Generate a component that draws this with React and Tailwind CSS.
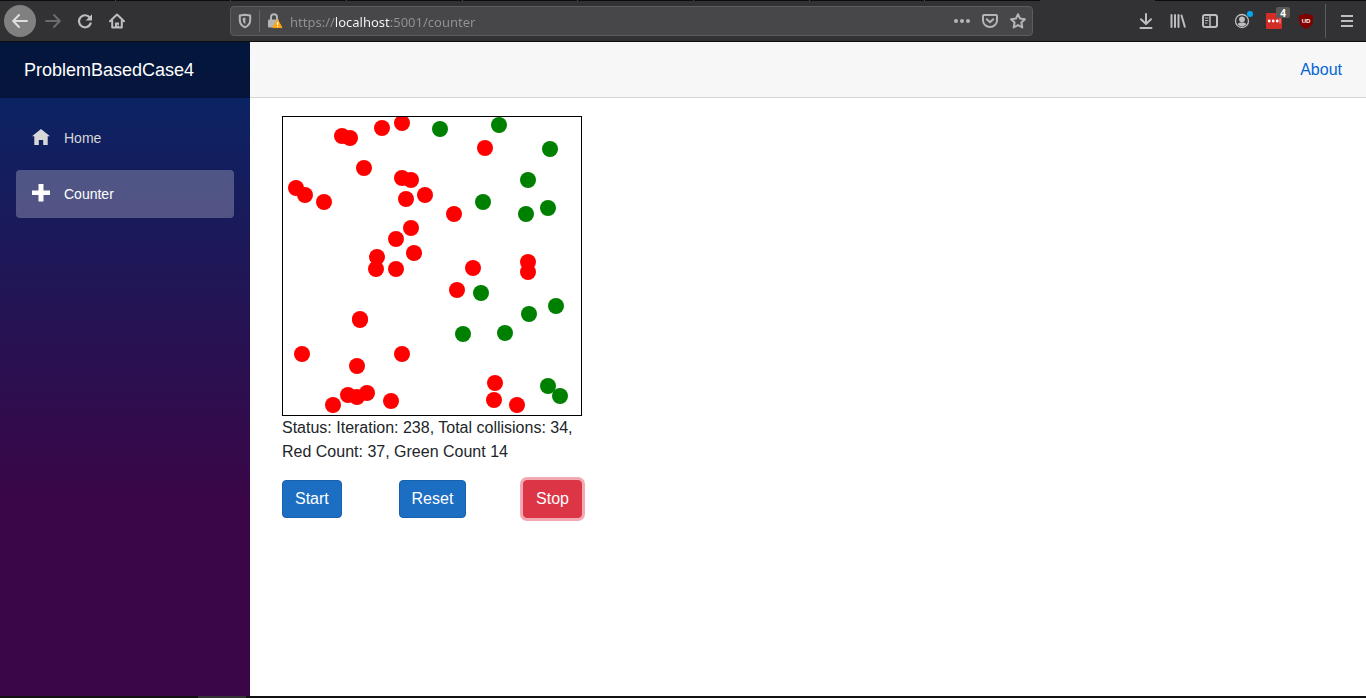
import React from "react";

const RED_DOTS = [
  [59, 19], [67, 21], [99, 11], [119, 6], [81, 51], [13, 71], [22, 78], [41, 85],
  [119, 61], [128, 63], [123, 82], [142, 78], [128, 111], [113, 122], [131, 136],
  [94, 140], [93, 152], [113, 152], [202, 31], [171, 97], [190, 151], [245, 145],
  [245, 155], [174, 173], [77, 202], [77, 203], [19, 237], [119, 237], [74, 249],
  [65, 278], [74, 280], [84, 276], [50, 288], [108, 284], [212, 266], [211, 283],
  [234, 288],
];

const GREEN_DOTS = [
  [157, 12], [216, 8], [267, 32], [245, 63], [200, 85], [243, 97], [265, 91],
  [198, 176], [246, 197], [273, 189], [180, 217], [222, 216], [265, 269], [277, 279],
];

const TABS = [1, 2, 3, 4, 5, 6, 7, 8, 9];

function Icon({ children, size = 16, className = "" }) {
  return (
    <svg
      width={size}
      height={size}
      viewBox="0 0 16 16"
      fill="none"
      stroke="currentColor"
      strokeWidth="2"
      strokeLinecap="round"
      strokeLinejoin="round"
      className={className}
      aria-hidden="true"
    >
      {children}
    </svg>
  );
}

function ToolButton({ label, tone = "text-[#bebebf]", className = "", children }) {
  return (
    <button
      type="button"
      aria-label={label}
      className={`flex h-8 w-8 shrink-0 items-center justify-center ${tone} ${className}`}
    >
      {children}
    </button>
  );
}

function AddressBar() {
  return (
    <div className="mx-[97px] flex h-[30px] min-w-0 flex-1 items-center rounded-sm border border-[#5c5c5e] bg-[#474749] text-[#b5b5b6]">
      <button type="button" aria-label="Tracking protection" className="flex h-7 w-7 shrink-0 items-center justify-center">
        <Icon size={16}>
          <path d="M8 1.700 13.200 2.600v4.200c0 3.600-1.900 6.100-5.200 7.500C4.700 12.900 2.800 10.400 2.800 6.800V2.600z" />
          <path d="M8.400 4.400v6.800C6.600 10.200 5.800 8.700 5.800 6.800V4.900z" fill="currentColor" stroke="none" />
        </Icon>
      </button>
      <span className="h-[22px] w-px shrink-0 bg-[#66666a]" />
      <button type="button" aria-label="Connection is not secure" className="flex h-7 w-[30px] shrink-0 items-center justify-center">
        <Icon size={16}>
          <path d="M4 7V4.200a3 3 0 0 1 6 0V7" strokeLinecap="butt" />
          <rect x="1" y="6.500" width="11" height="8" rx="1" fill="currentColor" stroke="none" />
          <path d="M10.600 6.800 15 14.600H6.200z" fill="#ffa50e" stroke="#ffa50e" strokeWidth="1" />
          <path d="M10.600 9v2.800M10.600 13v1" stroke="#fff" strokeWidth="1.300" strokeLinecap="butt" />
        </Icon>
      </button>
      <input
        aria-label="Address"
        type="text"
        defaultValue="https://localhost:5001/counter"
        className="h-7 min-w-0 flex-1 bg-[linear-gradient(90deg,#929293_46px,#f9f9fa_46px,#f9f9fa_100px,#929293_100px)] bg-clip-text pt-[2px] font-['Noto_Sans',sans-serif] text-[13px] text-transparent outline-none"
      />
      <button type="button" aria-label="Page actions" className="flex h-7 w-7 shrink-0 items-center justify-center">
        <Icon size={16}>
          <g fill="currentColor" stroke="none">
            <circle cx="2" cy="8" r="2" />
            <circle cx="8" cy="8" r="2" />
            <circle cx="14" cy="8" r="2" />
          </g>
        </Icon>
      </button>
      <button type="button" aria-label="Save to Pocket" className="flex h-7 w-7 shrink-0 items-center justify-center">
        <Icon size={16}>
          <path d="M2 2h12a1 1 0 0 1 1 1v4.500a7 6.500 0 0 1-14 0V3a1 1 0 0 1 1-1z" />
          <path d="M4.800 6.200 8 9.200l3.200-3" />
        </Icon>
      </button>
      <button type="button" aria-label="Bookmark this page" className="flex h-7 w-7 shrink-0 items-center justify-center">
        <Icon size={16}>
          <path d="M8 1.200 10.100 5.600 14.900 6.200 11.400 9.500 12.300 14.400 8 12 3.700 14.400 4.600 9.500 1.100 6.200 5.900 5.600z" />
        </Icon>
      </button>
    </div>
  );
}

function BrowserBar() {
  return (
    <div className="border-b border-[#0c0c0d] bg-[#323234]">
      <div className="flex h-px" aria-hidden="true">
        <div className="flex flex-1 bg-[#0c0c0d]">
          {TABS.map((tab) => (
            <div key={tab} className="h-px flex-1 border-r border-[#4a4a4c] last:border-r-0" />
          ))}
        </div>
        <div className="w-[115px]" />
        <div className="w-[211px] bg-[#0c0c0d]" />
      </div>
      <div className="flex h-10 items-center pr-[3px] pl-1">
        <ToolButton label="Back" tone="text-[#dededf]" className="rounded-full bg-[#808081]">
          <Icon><path d="M15 8H1.500M7 2 1.200 8 7 14" /></Icon>
        </ToolButton>
        <ToolButton label="Forward" tone="text-[#6b6b6d]" className="ml-px">
          <Icon><path d="M1 8h13.500M9 2l5.800 6L9 14" /></Icon>
        </ToolButton>
        <ToolButton label="Reload">
          <Icon>
            <path d="M12.800 4.600A6 6 0 1 0 13.600 10.500" strokeWidth="2.200" />
            <path d="M15 1.200v6.300H8.700z" fill="currentColor" stroke="none" />
          </Icon>
        </ToolButton>
        <ToolButton label="Home">
          <Icon>
            <path d="M1 8.300 8 1.500l7 6.800M3.200 7.500v7h9.600v-7" />
            <path d="M6 15V9.500h4V15z" fill="currentColor" stroke="none" />
            <circle cx="8.800" cy="12.300" r=".7" fill="#323234" stroke="none" />
          </Icon>
        </ToolButton>
        <AddressBar />
        <ToolButton label="Downloads">
          <Icon><path d="M8 1v9.500M3 6.200l5 4.800 5-4.800M2.500 15h11" /></Icon>
        </ToolButton>
        <ToolButton label="Library">
          <Icon><path d="M1.500 2v12M5 2v12M8.500 2v12M11.500 2.500l3.300 11.200" /></Icon>
        </ToolButton>
        <ToolButton label="Sidebars">
          <Icon>
            <rect x="1" y="2" width="14" height="12" rx="2" />
            <path d="M8 2v12" strokeWidth="1.500" />
            <path d="M3.500 5h2.500M3.500 7.500h2.500M3.500 10h1.500" strokeWidth="1" />
          </Icon>
        </ToolButton>
        <ToolButton label="Account" className="relative">
          <Icon>
            <circle cx="8" cy="8" r="6.500" strokeWidth="1.300" />
            <circle cx="8" cy="6.300" r="2.900" fill="currentColor" stroke="none" />
            <path d="M3.600 11.300c1-1.600 2.600-1.800 4.400-1.800s3.400.2 4.400 1.800A5.500 5.500 0 0 1 8 13.400a5.500 5.500 0 0 1-4.400-2.100z" fill="currentColor" stroke="none" />
          </Icon>
          <span className="absolute top-[6px] right-[5px] h-[6px] w-[6px] rounded-full bg-[#00a8f3]" />
        </ToolButton>
        <ToolButton label="Password manager" className="relative">
          <svg width="16" height="16" viewBox="0 0 16 16" aria-hidden="true">
            <rect width="16" height="16" rx="1" fill="#d32d27" />
            <g fill="#fff">
              <circle cx="3.200" cy="8" r="1.400" />
              <circle cx="7.200" cy="8" r="1.400" />
              <circle cx="11.200" cy="8" r="1.400" />
            </g>
            <path d="M14 5.500v5" stroke="#f0a8a5" strokeWidth="1" />
          </svg>
          <span className="absolute top-[2px] right-0 flex h-[11px] w-[14px] items-center justify-center rounded-xs bg-[#5a5a5b] font-['Noto_Sans',sans-serif] text-[10px] leading-none font-bold text-white">
            4
          </span>
        </ToolButton>
        <ToolButton label="Content blocker">
          <svg width="16" height="16" viewBox="0 0 16 16" aria-hidden="true">
            <path d="M8 .2C6 1.500 4 2 1 2v5.500c0 4 2.900 6.700 7 8.400 4.100-1.700 7-4.400 7-8.400V2C12 2 10 1.500 8 .2z" fill="#800000" />
            <text x="8" y="9.700" fill="#fff" fontSize="6" fontWeight="700" textAnchor="middle" fontFamily="Liberation Sans, sans-serif">UD</text>
          </svg>
        </ToolButton>
        <span className="mr-[5px] ml-[3px] h-[34px] w-px shrink-0 bg-[#5c5c5e]" />
        <ToolButton label="Open menu">
          <Icon><path d="M2 3h12M2 8h12M2 13h12" strokeLinecap="butt" /></Icon>
        </ToolButton>
      </div>
    </div>
  );
}

function NavItem({ href, label, active, icon }) {
  return (
    <a
      href={href}
      className={
        active
          ? "flex h-12 items-center rounded bg-white/25 px-4 text-sm text-white"
          : "flex h-12 items-center rounded px-4 text-sm text-[#d7d7d7]"
      }
    >
      <span className="w-8 pb-[2px]">
        <svg width="18" height="18" viewBox="0 0 18 18" fill="currentColor" aria-hidden="true">
          {icon}
        </svg>
      </span>
      {label}
    </a>
  );
}

function Sidebar() {
  return (
    <nav className="w-[250px] shrink-0 bg-[linear-gradient(180deg,#052767_0%,#3a0647_70%)]">
      <div className="flex h-14 items-center bg-black/40 px-6">
        <a href="/" className="text-lg text-white">ProblemBasedCase4</a>
      </div>
      <div className="flex flex-col gap-2 p-4">
        <NavItem
          href="/"
          label="Home"
          icon={<path d="M9 1 0 8.200h2.300V17h4.500v-5h4.400v5h4.500V8.200H18z" />}
        />
        <NavItem
          href="/counter"
          label="Counter"
          active
          icon={<path d="M6.500 0v6.500H0V11h6.500v6.500h5V11H18V6.500h-6.500V0z" />}
        />
      </div>
    </nav>
  );
}

function Simulation() {
  return (
    <section className="w-[300px]">
      <svg
        role="img"
        aria-label="Simulation field"
        viewBox="0 0 298 298"
        className="block h-[300px] w-full border border-black"
      >
        {RED_DOTS.map(([x, y]) => (
          <circle key={`${x}-${y}`} cx={x} cy={y} r="8" fill="red" />
        ))}
        {GREEN_DOTS.map(([x, y]) => (
          <circle key={`${x}-${y}`} cx={x} cy={y} r="8" fill="green" />
        ))}
      </svg>
      <p className="text-base text-[#212529]">
        Status: Iteration: 238, Total collisions: 34, Red Count: 37, Green Count 14
      </p>
      <div className="mt-4 flex justify-between text-base text-white">
        <button type="button" className="h-[38px] rounded border border-[#1861ac] bg-[#1b6ec2] px-3">Start</button>
        <button type="button" className="h-[38px] rounded border border-[#1861ac] bg-[#1b6ec2] px-3">Reset</button>
        <button type="button" className="h-[38px] rounded border border-[#dc3545] bg-[#dc3545] px-3 ring-3 ring-[#f2a9b1]">Stop</button>
      </div>
    </section>
  );
}

export default function App() {
  return (
    <div className="flex min-h-screen flex-col bg-white font-['Liberation_Sans',Arial,sans-serif]">
      <BrowserBar />
      <div className="flex flex-1">
        <Sidebar />
        <div className="min-w-0 flex-1">
          <header className="flex h-14 items-center justify-end border-b border-[#d6d5d5] bg-[#f7f7f7] px-6">
            <a href="/about" className="text-base text-[#0366d6]">About</a>
          </header>
          <main className="px-8 pt-[18px]">
            <Simulation />
          </main>
        </div>
      </div>
      <div className="h-[2px] bg-[#111112] pl-[198px]" aria-hidden="true">
        <div className="h-full w-12 bg-[#333334]" />
      </div>
    </div>
  );
}
